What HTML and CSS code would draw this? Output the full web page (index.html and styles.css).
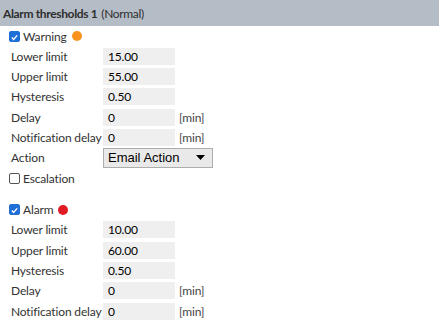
FILE: index.html
```html
<!DOCTYPE html>
<html>
<head>
<meta charset="utf-8">
<link rel="stylesheet" href="styles.css">
</head>
<body>
<div class="header"><b>Alarm thresholds 1</b> (Normal)</div>
<div class="panel">
  <div class="check-row"><span class="cb checked"><svg viewBox="0 0 11 11" width="11" height="11"><path d="M2.3 5.6 L4.4 7.8 L8.8 2.9" fill="none" stroke="#fff" stroke-width="1.7"/></svg></span><span class="cb-label">Warning</span><span class="dot orange"></span></div>
  <div class="row"><span class="lbl">Lower limit</span><span class="field">15.00</span></div>
  <div class="row"><span class="lbl">Upper limit</span><span class="field">55.00</span></div>
  <div class="row"><span class="lbl">Hysteresis</span><span class="field">0.50</span></div>
  <div class="row"><span class="lbl">Delay</span><span class="field">0</span><span class="unit">[min]</span></div>
  <div class="row"><span class="lbl">Notification delay</span><span class="field">0</span><span class="unit">[min]</span></div>
  <div class="row"><span class="lbl">Action</span><span class="select">Email Action<svg class="arrow" viewBox="0 0 9 5" width="9" height="5"><path d="M0 0 H9 L4.5 5 Z" fill="#000"/></svg></span></div>
  <div class="check-row esc"><span class="cb"></span><span class="cb-label">Escalation</span></div>

  <div class="check-row alarm"><span class="cb checked"><svg viewBox="0 0 11 11" width="11" height="11"><path d="M2.3 5.6 L4.4 7.8 L8.8 2.9" fill="none" stroke="#fff" stroke-width="1.7"/></svg></span><span class="cb-label">Alarm</span><span class="dot red"></span></div>
  <div class="row"><span class="lbl">Lower limit</span><span class="field">10.00</span></div>
  <div class="row"><span class="lbl">Upper limit</span><span class="field">60.00</span></div>
  <div class="row"><span class="lbl">Hysteresis</span><span class="field">0.50</span></div>
  <div class="row"><span class="lbl">Delay</span><span class="field">0</span><span class="unit">[min]</span></div>
  <div class="row"><span class="lbl">Notification delay</span><span class="field">0</span><span class="unit">[min]</span></div>
</div>
</body>
</html>
```
FILE: styles.css
```css
html, body {
  margin: 0;
  padding: 0;
  background: #fff;
}
body {
  font-family: Lato, "Noto Sans", sans-serif;
  font-size: 12px;
  letter-spacing: -0.15px;
  color: #333;
  white-space: nowrap;
}
.header {
  height: 26px;
  background: #b4bcc6;
  display: flex;
  align-items: center;
  padding-left: 3px;
  color: #2e2e2e;
  letter-spacing: -0.35px;
}
.header b {
  font-weight: 700;
  margin-right: 4px;
}
.panel {
  display: flex;
  flex-direction: column;
  padding-left: 9px;
}
.check-row {
  height: 20px;
  display: flex;
  align-items: center;
}
.check-row.esc {
  height: 21px;
}
.check-row.alarm {
  margin-top: 11px;
}
.cb {
  width: 11px;
  height: 11px;
  flex-shrink: 0;
  box-sizing: border-box;
  border: 1px solid #555;
  border-radius: 2px;
  background: #fff;
  display: flex;
}
.cb.checked {
  background: #1f6fd6;
  border-color: #1f6fd6;
}
.cb-label {
  margin-left: 3px;
  color: #333;
}
.dot {
  width: 10px;
  height: 10px;
  border-radius: 50%;
  margin-left: 5px;
}
.dot.orange { background: #f7931e; }
.dot.red { background: #e01b24; }
.row {
  height: 20.3px;
  display: flex;
  align-items: center;
}
.lbl {
  width: 92px;
  flex-shrink: 0;
  padding-left: 2px;
  color: #333;
}
.field {
  width: 72px;
  height: 17px;
  flex-shrink: 0;
  background: #efefef;
  box-sizing: border-box;
  padding-left: 5px;
  display: flex;
  align-items: center;
  color: #000;
}
.unit {
  margin-left: 4px;
  color: #444;
}
.select {
  width: 110px;
  height: 20px;
  flex-shrink: 0;
  box-sizing: border-box;
  border: 1px solid #adadad;
  background: #e9e9e9;
  display: flex;
  align-items: center;
  justify-content: space-between;
  padding: 0 7px 0 4px;
  font-family: "Liberation Sans", Arial, sans-serif;
  font-size: 13px;
  letter-spacing: 0;
  color: #000;
}
.arrow {
  display: block;
}
```
